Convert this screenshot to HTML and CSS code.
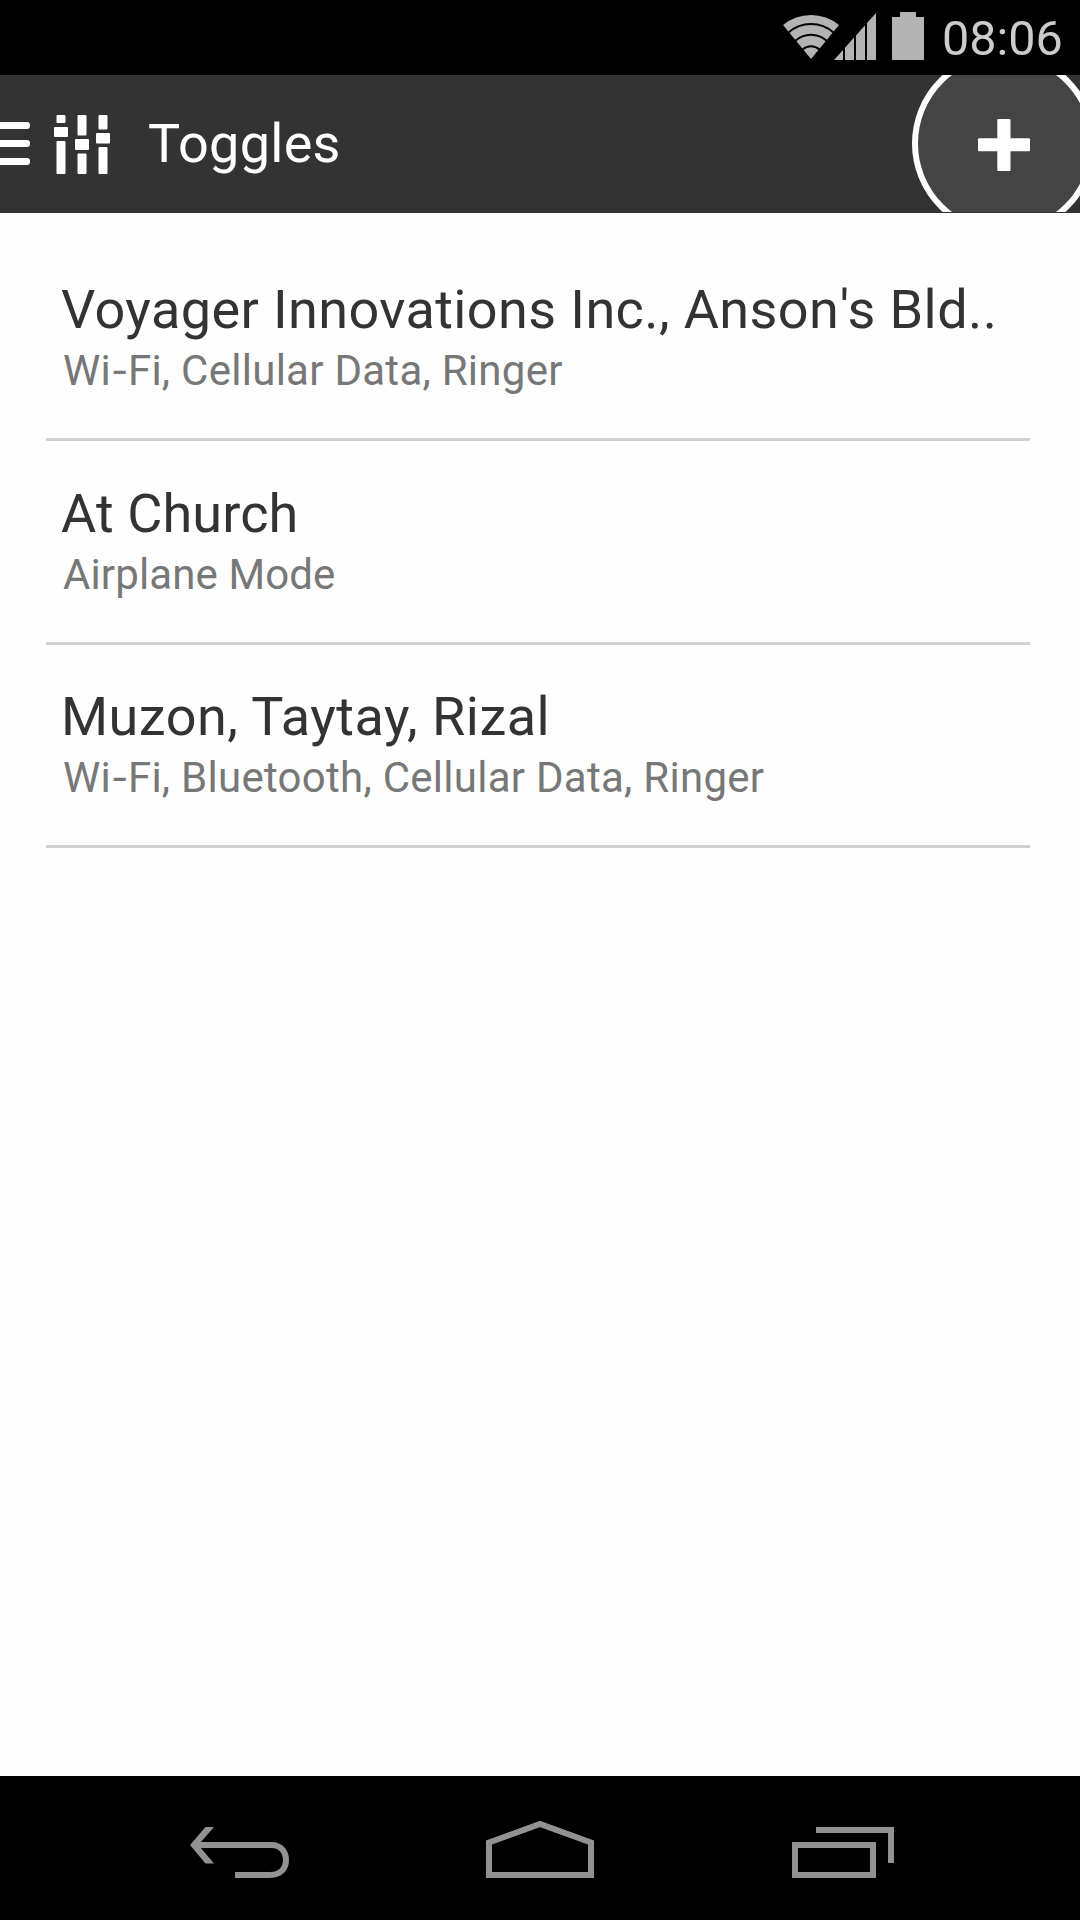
FILE: index.html
```html
<!DOCTYPE html>
<html lang="en">
<head>
<meta charset="utf-8">
<title>Toggles</title>
<link rel="stylesheet" href="styles.css">
</head>
<body>
<div class="screen">
  <div class="status">
    <svg class="status-icons" width="150" height="75" viewBox="780 0 150 75">
      <path d="M811 59L783 25A44 44 0 0 1 839 25Z"/>
      <g class="gaps">
        <path d="M788.500 32.400A34 34 0 0 1 833.500 32.400"/>
        <path d="M795 41A23.500 23.500 0 0 1 827 41"/>
        <path d="M802.500 49.500A12.500 12.500 0 0 1 819.500 49.500"/>
      </g>
      <path d="M834 60L843 50V60ZM845 47.700L854 37.600V60H845ZM856 35.400L865 25.300V60H856ZM867 23L876 13V60H867Z"/>
      <path d="M892 17H900V12H916V17H924V60H892Z"/>
    </svg>
    <span class="clock">08:06</span>
  </div>
  <header class="bar">
    <svg class="menu" width="120" height="138" viewBox="0 75 120 138">
      <rect x="-10" y="122" width="40" height="7" rx="3"/>
      <rect x="-10" y="140" width="40" height="7" rx="3"/>
      <rect x="-10" y="158" width="40" height="7" rx="3"/>
      <rect x="56.500" y="115" width="9" height="8" rx="1"/>
      <rect x="54" y="127" width="14" height="10" rx="1"/>
      <rect x="56.500" y="141" width="9" height="33" rx="1"/>
      <rect x="77.500" y="115" width="9" height="20.500" rx="1"/>
      <rect x="75" y="139" width="14" height="11" rx="1"/>
      <rect x="77.500" y="153.500" width="9" height="20.500" rx="1"/>
      <rect x="98.500" y="115" width="9" height="14.500" rx="1"/>
      <rect x="96" y="133" width="14" height="10.500" rx="1"/>
      <rect x="98.500" y="147" width="9" height="27" rx="1"/>
    </svg>
    <h1 class="title">Toggles</h1>
    <svg class="add" width="180" height="138" viewBox="900 75 180 138">
      <circle cx="1004" cy="143.500" r="89"/>
      <path class="edge" d="M900 212.500H1080"/>
      <rect x="978" y="138.300" width="52" height="13" rx="1"/>
      <rect x="997.300" y="119" width="13.200" height="52" rx="1"/>
    </svg>
  </header>
  <main class="list">
    <section class="item"><h2 class="name long">Voyager Innovations Inc., Anson<span class="mark">'</span>s Bld..</h2><p class="detail">Wi<span class="hyphen">-</span>Fi, Cellular Data, Ringer</p></section>
    <section class="item"><h2 class="name tight">At Church</h2><p class="detail tight">Airplane Mode</p></section>
    <section class="item last"><h2 class="name">Muzon, Taytay, Rizal</h2><p class="detail">Wi<span class="hyphen">-</span>Fi, Bluetooth, Cellular Data, Ringer</p></section>
  </main>
  <nav class="nav">
    <svg width="1080" height="144" viewBox="0 1776 1080 144">
      <path d="M193 1845H271.500C281 1845 286 1852 286 1860S281 1875 270 1875H235"/>
      <path class="fill" d="M190 1845L205.500 1827H214L200 1843V1847L214 1863.500H205.500Z"/>
      <path d="M489 1875V1842.500L540 1824L591 1842.500V1875Z"/>
      <path d="M816 1830H891V1863M795 1845H873V1875H795Z"/>
    </svg>
  </nav>
</div>
</body>
</html>
```

FILE: styles.css
```css
body {
  margin: 0;
  font-family: Roboto, sans-serif;
  background: #fefefe;
}
.screen {
  display: flex;
  flex-direction: column;
  width: 1080px;
  height: 1920px;
  overflow: hidden;
}
svg { display: block; }
h1, h2, p { margin: 0; font-weight: 400; white-space: nowrap; }
.status {
  display: flex;
  height: 75px;
  padding-left: 780px;
  background: #000;
}
.status-icons { fill: #b3b3b3; }
.gaps { fill: none; stroke: #000; stroke-width: 2; }
.clock {
  padding: 11px 0 0 12px;
  font-size: 48.5px;
  line-height: 56px;
  color: #ccc;
}
.bar {
  display: flex;
  height: 138px;
  background: #333;
}
.menu { fill: #fff; }
.title {
  flex: 1;
  padding: 37px 0 0 28px;
  font-size: 54px;
  line-height: 64px;
  letter-spacing: 0.3px;
  color: #fff;
}
.add { fill: #fff; }
.add circle { fill: #444; stroke: #fff; stroke-width: 6; }
.add .edge { stroke: #333; stroke-width: 1; }
.list {
  flex: 1;
  padding: 24px 50px 0 46px;
}
.item {
  box-sizing: border-box;
  height: 204px;
  padding: 41px 0 0 15px;
  border-bottom: 3px solid #d0d0d0;
}
.item.last { height: 203px; padding-top: 40px; }
.name {
  font-size: 54px;
  line-height: 64px;
  letter-spacing: 0.47px;
  color: #333;
}
.name.long { letter-spacing: 0.4px; }
.mark { margin: 0 0 0 0.5px; }
.detail {
  margin-top: 4px;
  padding-left: 2px;
  font-size: 42px;
  line-height: 50px;
  letter-spacing: 0.27px;
  color: #777;
}
.hyphen {
  display: inline-block;
  margin: 0 2px 0 3px;
  transform: scaleX(1.2);
}
.name.tight, .detail.tight { letter-spacing: 0.12px; }
.nav { height: 144px; background: #000; }
.nav path { fill: none; stroke: #929292; stroke-width: 6; }
.nav .fill { fill: #929292; stroke: none; }
```
